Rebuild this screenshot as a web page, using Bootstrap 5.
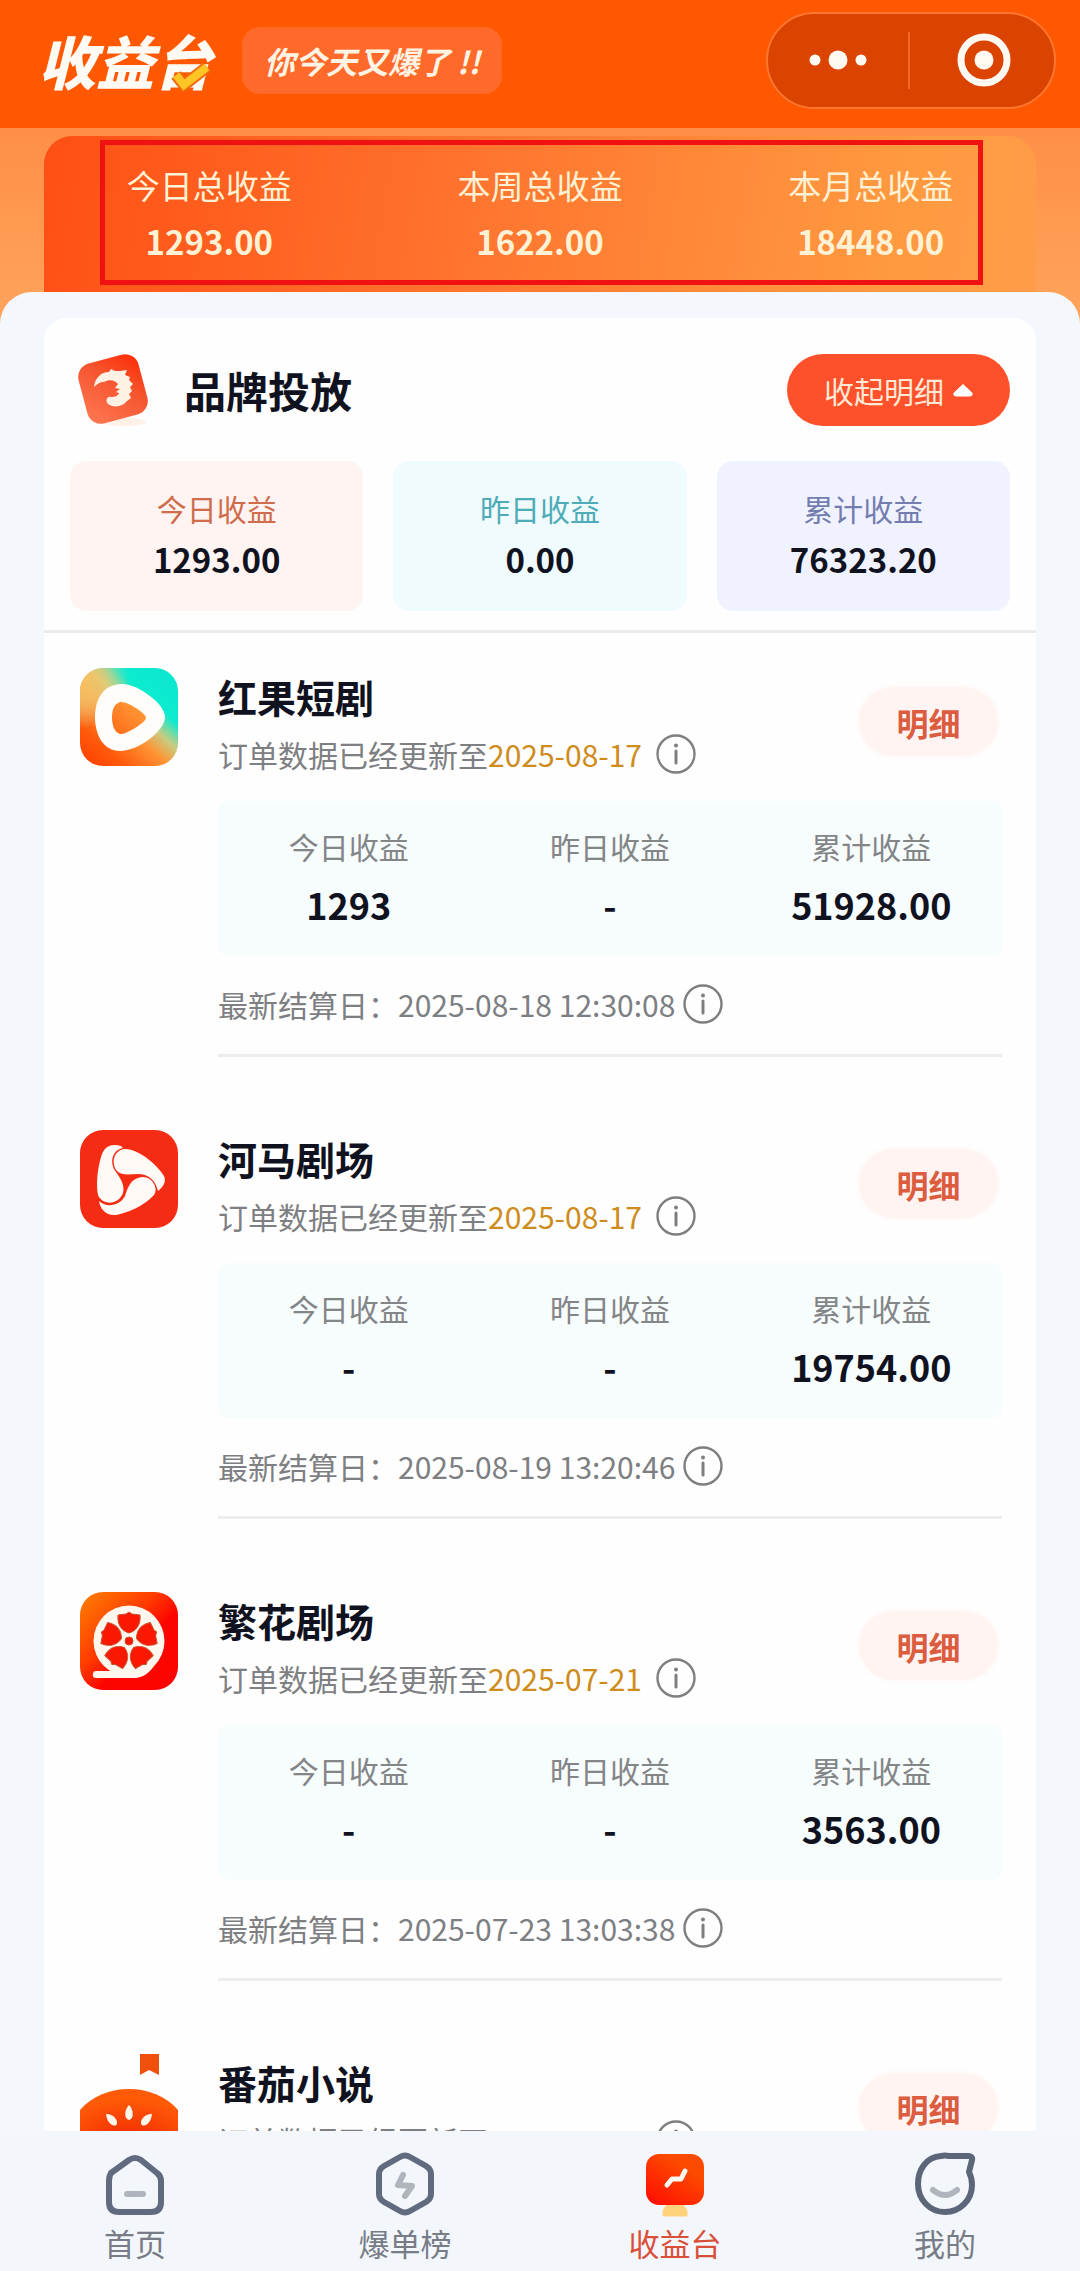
<!DOCTYPE html>
<html lang="zh-CN">
<head>
<meta charset="utf-8">
<meta name="viewport" content="width=device-width, initial-scale=1">
<title>收益台</title>
<link href="https://cdn.jsdelivr.net/npm/bootstrap@5.3.0/dist/css/bootstrap.min.css" rel="stylesheet">
<style>
  body { font-family: "Noto Sans CJK SC", "Noto Sans", sans-serif; font-size: 30px; line-height: 40px; color: #10131f; background: #f4f7fb; }
  svg { display: block; flex: none; }
  .topbar { background: #ff5800; height: 128px; padding: 0 24px 8px 38px; }
  .brand { font-size: 58px; line-height: 72px; font-weight: 900; font-style: italic; color: #fffaf4; }
  .brand svg { right: 0; bottom: 4px; }
  .slogan { margin-left: 30px; padding: 0 22px; border-radius: 18px; background: #ff6a2a; color: #fff3e4; font-size: 31px; line-height: 67px; font-weight: 700; font-style: italic; }
  .capsule { width: 290px; height: 97px; border: 2px solid #ff7630; border-radius: 49px; background: #db4400; }
  .capsule button { flex: 1; border: 0; background: none; padding: 0; }
  .capsule .split { width: 2px; height: 57px; background: #f4662a; }
  .hero { background: linear-gradient(#ff8f48, #ffa45c); padding: 8px 44px 0; margin-bottom: -32px; }
  .totals { background: linear-gradient(100deg, #ff4f14, #ff7630 45%, #ff9a40 85%, #ff9c48); border-radius: 28px 28px 0 0; padding: 29px 0 58px; position: relative; color: #fff1d4; }
  .totals::before { content: ""; position: absolute; inset: 4px 53px 39px 56px; border: 5px solid #f01212; }
  .totals .caption { font-size: 33px; line-height: 40px; }
  .totals .sum { font-size: 33px; line-height: 40px; font-weight: 700; margin-top: 16px; padding-bottom: 5px; }
  .sheet { position: relative; background: #f4f7fb; border-radius: 32px 32px 0 0; padding: 26px 44px 0; }
  .panel { background: #fefefe; border-radius: 22px 22px 0 0; }
  .panel-top { padding: 36px 26px 19px; border-bottom: 3px solid #e9ebee; }
  .panel-top h1 { font-size: 42px; line-height: 72px; font-weight: 700; padding-left: 32px; }
  .fold { border: 0; border-radius: 36px; height: 72px; padding: 0 36px 0 37px; background: #ff502c; color: #ffe9d4; font-size: 30px; gap: 8px; }
  .tiles { gap: 30px; margin-top: 35px; }
  .tile { flex: 1 1 0; border-radius: 16px; padding: 27px 0 32px; text-align: center; }
  .tile strong { display: block; font-size: 33px; line-height: 40px; margin-top: 11px; font-weight: 700; }
  .tile-red { background: #fff4f1; } .tile-red span { color: #cf6c4c; }
  .tile-cyan { background: #effbfd; } .tile-cyan span { color: #4fabb8; }
  .tile-blue { background: #f0f3ff; } .tile-blue span { color: #737db0; }
  .entry { padding: 35px 34px 38px 36px; gap: 40px; }
  .entry-body { flex: 1; min-width: 0; border-bottom: 3px solid #ebedee; padding-bottom: 23px; }
  .entry h2 { font-size: 39px; line-height: 56px; font-weight: 700; margin: 0 0 3px; }
  .note { line-height: 54px; color: #7d7f82; }
  .note time { color: #ce8c1c; margin-right: 14px; }
  .entry .detail { border: 0; margin: 19px 4px 0 0; width: 139px; height: 69px; border-radius: 35px; background: #fff4f1; color: #dc5c40; font-size: 32px; font-weight: 700; padding: 0; box-shadow: 0 0 6px #fff6f3; }
  .figures { background: #f7fcfd; border-radius: 10px; margin: 20px 0 21px; padding: 25px 0 27px; text-align: center; color: #838587; }
  .figures strong { display: block; font-size: 36px; line-height: 50px; margin-top: 13px; color: #10131f; font-weight: 700; }
  .info { color: #7c7e80; border: 0; padding: 0; background: none; }
  .tabs { background: #f3f7fb; padding: 20px 0 6px; }
  .tabs a { flex: 1 1 0; text-decoration: none; color: #787c86; font-size: 31px; line-height: 44px; gap: 2px; }
  .tabs a.active { color: #d9503a; }
</style>
<script src="https://cdn.jsdelivr.net/npm/bootstrap@5.3.0/dist/js/bootstrap.bundle.min.js"></script>
</head>
<body>
<svg width="0" height="0" class="position-absolute" aria-hidden="true">
  <defs>
    <symbol id="i-info" viewBox="0 0 40 40">
      <circle cx="20" cy="20" r="18.5" fill="none" stroke="currentColor" stroke-width="2.4"/>
      <circle cx="20" cy="11.5" r="2" fill="currentColor"/>
      <path d="M20 17v12" stroke="currentColor" stroke-width="3" stroke-linecap="round"/>
    </symbol>
    <linearGradient id="g-brand" x1="0" y1="1" x2="1" y2="0"><stop offset="0" stop-color="#ff7a55"/><stop offset=".6" stop-color="#f5542e"/><stop offset="1" stop-color="#ff2800"/></linearGradient>
    <linearGradient id="g-fruit" x1=".1" y1="1" x2=".9" y2=".1"><stop offset="0" stop-color="#ff4200"/><stop offset=".2" stop-color="#ff5a0c"/><stop offset=".45" stop-color="#ff9434"/><stop offset=".6" stop-color="#c8cc80"/><stop offset=".76" stop-color="#0cebd0"/><stop offset="1" stop-color="#0ce8d0"/></linearGradient>
    <linearGradient id="g-fruit-core" x1="0" y1="1" x2="1" y2="0"><stop offset="0" stop-color="#ff6a18"/><stop offset="1" stop-color="#ffa23c"/></linearGradient>
    <radialGradient id="g-tomato" cx=".5" cy=".95" r=".8"><stop offset="0" stop-color="#f02000"/><stop offset="1" stop-color="#ff5a08"/></radialGradient>
    <linearGradient id="g-reel" x1="0" y1="0" x2=".8" y2=".8"><stop offset="0" stop-color="#ff8200"/><stop offset=".5" stop-color="#ff3a00"/><stop offset=".75" stop-color="#fc0400"/></linearGradient>
    <linearGradient id="g-tab" x1="0" y1="1" x2=".6" y2=".2"><stop offset="0" stop-color="#ff0a00"/><stop offset="1" stop-color="#fc4a00"/></linearGradient>
  </defs>
</svg>

<div class="d-flex flex-column vh-100 overflow-hidden">
  <header class="topbar d-flex align-items-center flex-shrink-0">
    <div class="brand position-relative text-nowrap">收益台
      <svg class="position-absolute" width="42" height="32" viewBox="0 0 42 32" aria-hidden="true"><path d="M6 15l8 10L37 7" fill="none" stroke="#f06a10" stroke-width="12"/><path d="M6 15l8 10L37 7" fill="none" stroke="#ffc524" stroke-width="8"/></svg>
    </div>
    <div class="slogan text-nowrap">你今天又爆了 !!</div>
    <div class="capsule d-flex align-items-center ms-auto">
      <button type="button" aria-label="更多" class="d-flex justify-content-center"><svg width="60" height="20" viewBox="0 0 60 20" fill="#fff9f2"><circle cx="7" cy="10" r="5.5"/><circle cx="30" cy="10" r="9.5"/><circle cx="53" cy="10" r="5.5"/></svg></button>
      <span class="split"></span>
      <button type="button" aria-label="关闭" class="d-flex justify-content-center ps-1"><svg width="54" height="54" viewBox="0 0 54 54"><circle cx="27" cy="27" r="23" fill="none" stroke="#fff9f2" stroke-width="7"/><circle cx="27" cy="27" r="9.5" fill="#fff9f2"/></svg></button>
    </div>
  </header>

  <main class="flex-grow-1 overflow-hidden">
    <section class="hero">
      <div class="totals d-flex text-center">
        <div class="col-4"><div class="caption">今日总收益</div><div class="sum">1293.00</div></div>
        <div class="col-4"><div class="caption">本周总收益</div><div class="sum">1622.00</div></div>
        <div class="col-4"><div class="caption">本月总收益</div><div class="sum">18448.00</div></div>
      </div>
    </section>

    <div class="sheet">
      <div class="panel">
        <section class="panel-top">
          <div class="d-flex align-items-center">
            <svg width="82" height="72" viewBox="0 0 82 72" aria-hidden="true">
              <ellipse cx="54" cy="68" rx="22" ry="4" fill="#fff0e8"/>
              <rect x="12" y="4" width="62" height="62" rx="14" transform="rotate(-15 43 35)" fill="url(#g-brand)"/>
              <path d="M24 33C25 24 31 18 39 18L41 15L45 17L50 17L57 16L55 21L60 23L59 26L63 30L60 33L62 37L59 40L61 44L57 47C53 53 43 54 38 50C35 47 37 42 41 43C45 43 48 42 49 39L46 38L50 35L45 34L48 30C45 26 39 25 34 28C30 28 27 30 24 33z" fill="#fff2e4"/>
            </svg>
            <h1 class="mb-0">品牌投放</h1>
            <button type="button" class="fold d-flex align-items-center ms-auto">收起明细<svg width="22" height="16" viewBox="0 0 22 16" aria-hidden="true"><path d="M11 2.5L20 11q1 3-2 3H4q-3 0-2-3z" fill="#fff" stroke="#fff" stroke-linejoin="round"/></svg></button>
          </div>
          <div class="tiles d-flex">
            <div class="tile tile-red"><span>今日收益</span><strong>1293.00</strong></div>
            <div class="tile tile-cyan"><span>昨日收益</span><strong>0.00</strong></div>
            <div class="tile tile-blue"><span>累计收益</span><strong>76323.20</strong></div>
          </div>
        </section>

        <article class="entry d-flex align-items-start">
          <svg width="98" height="98" viewBox="0 0 98 98" aria-hidden="true">
            <defs><radialGradient id="g-fruit-a" cx="0" cy=".12" r=".5"><stop offset="0" stop-color="#f8c060"/><stop offset=".5" stop-color="#f0c870" stop-opacity=".7"/><stop offset="1" stop-color="#e0d890" stop-opacity="0"/></radialGradient></defs>
            <rect width="98" height="98" rx="23" fill="url(#g-fruit)"/><rect width="98" height="98" rx="23" fill="url(#g-fruit-a)"/>
            <path fill="#fffdfa" d="M42 16C58 16 85 36 85 49C85 63 58 83 40 83C24 83 15 68 15 49C15 30 24 16 42 16z"/>
            <path fill="url(#g-fruit-core)" d="M40 34C34 36 32 42 32 49C32 57 34 64 40 66C46 67 66 54 66 50C66 45 47 33 40 34z"/>
          </svg>
          <div class="entry-body">
            <div class="d-flex align-items-start justify-content-between">
              <div>
                <h2>红果短剧</h2>
                <div class="note d-flex align-items-center">订单数据已经更新至<time>2025-08-17</time><button type="button" class="info" aria-label="更新说明"><svg width="40" height="40"><use href="#i-info"/></svg></button></div>
              </div>
              <button type="button" class="detail">明细</button>
            </div>
            <div class="figures d-flex">
              <div class="col-4">今日收益<strong>1293</strong></div>
              <div class="col-4">昨日收益<strong>-</strong></div>
              <div class="col-4">累计收益<strong>51928.00</strong></div>
            </div>
            <div class="note d-flex align-items-center">最新结算日：2025-08-18 12:30:08<button type="button" class="info ms-2" aria-label="结算说明"><svg width="40" height="40"><use href="#i-info"/></svg></button></div>
          </div>
        </article>

        <article class="entry d-flex align-items-start">
          <svg width="98" height="98" viewBox="0 0 98 98" aria-hidden="true">
            <rect width="98" height="98" rx="23" fill="#f52c14"/>
            <path d="M41 16C30 13 24 17 21 27C17 41 16 56 18 65C22 75 38 76 43 63C45 54 40 48 36 42C29 33 32 20 43 18z" fill="#fffaf6"/>
            <path d="M45 19C33 20 31 34 37 41C42 46 50 44 58 44C69 44 76 51 78 61C82 58 87 52 84 46C79 37 60 19 45 19z" fill="#fffaf6"/>
            <path d="M19 71C26 78 40 76 45 66C48 58 50 48 63 47C72 47 79 58 74 65C64 76 47 83 36 85C26 86 20 79 19 71z" fill="#fffaf6"/>
          </svg>
          <div class="entry-body">
            <div class="d-flex align-items-start justify-content-between">
              <div>
                <h2>河马剧场</h2>
                <div class="note d-flex align-items-center">订单数据已经更新至<time>2025-08-17</time><button type="button" class="info" aria-label="更新说明"><svg width="40" height="40"><use href="#i-info"/></svg></button></div>
              </div>
              <button type="button" class="detail">明细</button>
            </div>
            <div class="figures d-flex">
              <div class="col-4">今日收益<strong>-</strong></div>
              <div class="col-4">昨日收益<strong>-</strong></div>
              <div class="col-4">累计收益<strong>19754.00</strong></div>
            </div>
            <div class="note d-flex align-items-center">最新结算日：2025-08-19 13:20:46<button type="button" class="info ms-2" aria-label="结算说明"><svg width="40" height="40"><use href="#i-info"/></svg></button></div>
          </div>
        </article>

        <article class="entry d-flex align-items-start">
          <svg width="98" height="98" viewBox="0 0 98 98" aria-hidden="true">
            <defs><path id="petal" d="M49 20L52 22L60 23C61 33 56 39 49 41C42 39 37 33 38 23L46 22z"/></defs>
            <rect width="98" height="98" rx="23" fill="url(#g-reel)"/>
            <circle cx="49" cy="49" r="35.5" fill="#fff6ee"/>
            <path d="M16 79H56L74 74C67 84 60 86 54 86H16q-4 0-3-4 0-3 3-3z" fill="#fff6ee"/>
            <g fill="#fa1800" stroke="#c8502c" stroke-width="1"><use href="#petal"/><use href="#petal" transform="rotate(72 49 49)"/><use href="#petal" transform="rotate(144 49 49)"/><use href="#petal" transform="rotate(216 49 49)"/><use href="#petal" transform="rotate(288 49 49)"/><circle cx="49" cy="49" r="4"/></g>
          </svg>
          <div class="entry-body">
            <div class="d-flex align-items-start justify-content-between">
              <div>
                <h2>繁花剧场</h2>
                <div class="note d-flex align-items-center">订单数据已经更新至<time>2025-07-21</time><button type="button" class="info" aria-label="更新说明"><svg width="40" height="40"><use href="#i-info"/></svg></button></div>
              </div>
              <button type="button" class="detail">明细</button>
            </div>
            <div class="figures d-flex">
              <div class="col-4">今日收益<strong>-</strong></div>
              <div class="col-4">昨日收益<strong>-</strong></div>
              <div class="col-4">累计收益<strong>3563.00</strong></div>
            </div>
            <div class="note d-flex align-items-center">最新结算日：2025-07-23 13:03:38<button type="button" class="info ms-2" aria-label="结算说明"><svg width="40" height="40"><use href="#i-info"/></svg></button></div>
          </div>
        </article>

        <article class="entry d-flex align-items-start">
          <svg width="98" height="98" viewBox="0 0 98 98" aria-hidden="true">
            <path d="M60 0h19v21l-10-5-9 5z" fill="#f0500c"/>
            <path d="M0 56C24 28 74 28 98 56V98H0z" fill="url(#g-tomato)"/>
            <g fill="#fff6ec"><path id="seed" d="M49 51c5 5 5 14 0 15c-5-1-5-10 0-15z"/><use href="#seed" transform="rotate(-42 49 85)"/><use href="#seed" transform="rotate(42 49 85)"/></g>
          </svg>
          <div class="entry-body">
            <div class="d-flex align-items-start justify-content-between">
              <div>
                <h2>番茄小说</h2>
                <div class="note d-flex align-items-center">订单数据已经更新至<time>2025-08-18</time><button type="button" class="info" aria-label="更新说明"><svg width="40" height="40"><use href="#i-info"/></svg></button></div>
              </div>
              <button type="button" class="detail">明细</button>
            </div>
          </div>
        </article>
      </div>
    </div>
  </main>

  <nav class="tabs d-flex flex-shrink-0" aria-label="主导航">
    <a href="#home" class="d-flex flex-column align-items-center">
      <svg width="64" height="68" viewBox="0 0 64 68" fill="none" stroke-linecap="round" stroke-linejoin="round"><path d="M8 22L26 9q6-4 12 0L54 22q4 3 4 8V51q0 10-10 10H16Q6 61 6 51V30q0-5 2-8z" stroke="#606b7f" stroke-width="6"/><path d="M24 43h16" stroke="#b0b4bc" stroke-width="6"/></svg>首页</a>
    <a href="#rank" class="d-flex flex-column align-items-center">
      <svg width="64" height="68" viewBox="0 0 64 68" fill="none" stroke-linecap="round" stroke-linejoin="round"><path d="M27 6q5-3 10 0L53 15q5 3 5 8V43q0 5-5 8L37 60q-5 3-10 0L11 51q-5-3-5-8V23q0-5 5-8z" stroke="#606b7f" stroke-width="6"/><path d="M30 24l-5 10 14 1-7 10" stroke="#b0b4bc" stroke-width="6"/></svg>爆单榜</a>
    <a href="#income" class="active d-flex flex-column align-items-center" aria-current="page">
      <svg width="64" height="68" viewBox="0 0 64 68" fill="none" stroke-linecap="round" stroke-linejoin="round"><path d="M25 54h14l4 6v4H21v-4z" fill="#ffd27c" stroke="#ffd27c" stroke-width="3"/><rect x="3" y="3" width="58" height="51" rx="13" fill="url(#g-tab)"/><path d="M24 34l5-6h9l4-8" stroke="#fff8f0" stroke-width="5"/></svg>收益台</a>
    <a href="#mine" class="d-flex flex-column align-items-center">
      <svg width="64" height="68" viewBox="0 0 64 68" fill="none" stroke-linecap="round" stroke-linejoin="round"><path d="M36 5Q32 4 28 5C13 6 5 19 5 33C5 49 17 61 32 61C47 61 59 49 59 34Q59 27 56 21L59 9q1-4-4-4z" stroke="#5c6679" stroke-width="6"/><path d="M20 39q12 10 24 0" stroke="#b0b4bc" stroke-width="6"/></svg>我的</a>
  </nav>
</div>
</body>
</html>
